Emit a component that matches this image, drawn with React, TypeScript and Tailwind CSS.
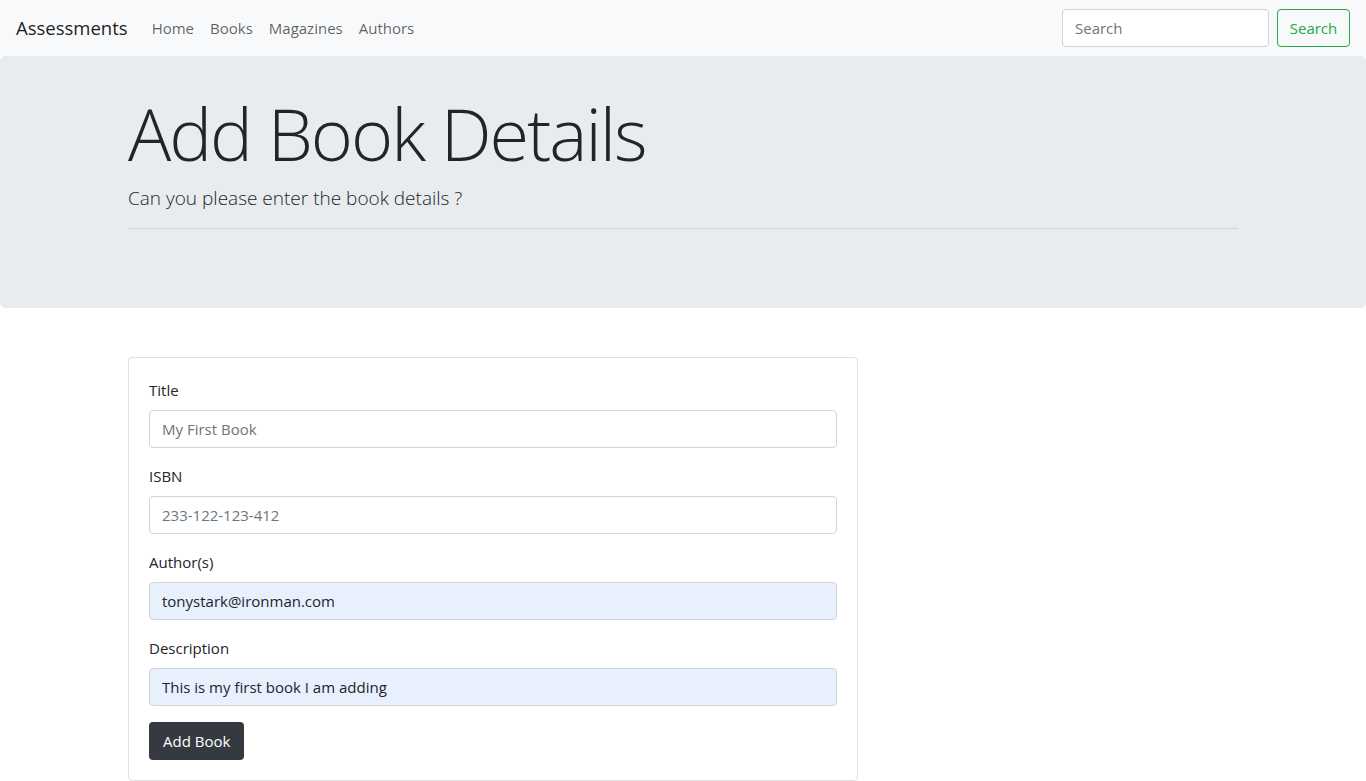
import React from 'react';

const font = { fontFamily: '"Open Sans", "Noto Sans", sans-serif' };

const NavBar: React.FC = () => (
  <nav className="h-14 bg-[#f8f9fa] flex items-center justify-between px-4">
    <div className="flex items-center">
      <span className="text-[18.5px] leading-[30px] text-[#000000e6] mr-4">Assessments</span>
      <ul className="flex items-center">
        {['Home', 'Books', 'Magazines', 'Authors'].map((l) => (
          <li key={l} className="px-2 py-2 text-[15px] leading-6 text-[#000000a0]">
            {l}
          </li>
        ))}
      </ul>
    </div>
    <form className="flex items-center">
      <input
        type="text"
        placeholder="Search"
        className="w-[207px] h-[38px] px-3 text-[15px] text-[#495057] bg-white border border-[#ced4da] rounded-[4px] placeholder:text-[#6c757d] outline-none mr-2"
      />
      <button
        type="button"
        className="h-[38px] w-[73px] text-[15px] text-[#28a745] border border-[#28a745] rounded-[4px] bg-transparent"
      >
        Search
      </button>
    </form>
  </nav>
);

interface FieldProps {
  label: string;
  value?: string;
  placeholder?: string;
  autofilled?: boolean;
}

const Field: React.FC<FieldProps> = ({ label, value, placeholder, autofilled }) => (
  <div className="mb-4">
    <label className="block text-[15px] leading-6 text-[#212529] mb-2">{label}</label>
    <input
      type="text"
      defaultValue={value}
      placeholder={placeholder}
      className={
        autofilled
          ? 'w-full h-[38px] px-3 text-[15px] text-[#212529] bg-[#e8f0fe] border border-[#ced4da] rounded-[4px] outline-none'
          : 'w-full h-[38px] px-3 text-[15px] text-[#495057] bg-white border border-[#ced4da] rounded-[4px] placeholder:text-[#6c757d] outline-none'
      }
    />
  </div>
);

export default function App() {
  return (
    <div className="min-h-screen bg-white" style={font}>
      <NavBar />

      {/* Jumbotron */}
      <div className="bg-[#e9ecef] rounded-[5px] h-[252px] mb-[49px]">
        <div className="w-[1140px] mx-auto px-[15px] pt-[34px]">
          <h1 className="text-[72px] leading-[86px] font-light text-[#212529] tracking-[-2px]">Add Book Details</h1>
          <p className="text-[19px] leading-[30px] font-light text-[#212529] mt-[7px]">
            Can you please enter the book details ?
          </p>
          <hr className="mt-[15px] border-0 border-t border-[#0000001a]" />
        </div>
      </div>

      {/* Form */}
      <div className="w-[1140px] mx-auto px-[15px]">
        <div className="w-[730px] border border-[#00000020] rounded-[4px] p-5">
          <Field label="Title" placeholder="My First Book" />
          <Field label="ISBN" placeholder="233-122-123-412" />
          <Field label="Author(s)" value="tonystark@ironman.com" autofilled />
          <Field label="Description" value="This is my first book I am adding" autofilled />
          <button
            type="button"
            className="h-[38px] px-[14px] text-[15px] text-white bg-[#343a40] rounded-[4px]"
          >
            Add Book
          </button>
        </div>
      </div>
    </div>
  );
}
